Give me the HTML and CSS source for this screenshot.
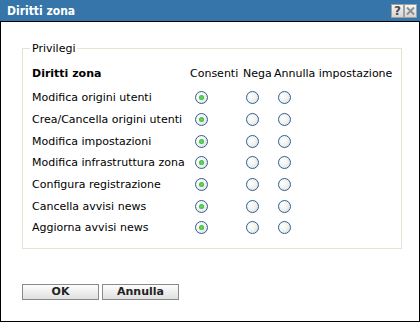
FILE: index.html
```html
<!DOCTYPE html>
<html lang="it">
<head>
    <meta charset="UTF-8">
    <title>Diritti zona</title>
    <link rel="stylesheet" href="styles.css">
</head>
<body>
    <div class="dialog">
        <div class="titlebar">
            <span class="title">Diritti zona</span>
            <div class="title-buttons">
                <span class="tbtn">?</span>
                <span class="tbtn close">
                    <svg width="11" height="12" viewBox="0 0 11 12"><path d="M2 2.5 L9 9.5 M9 2.5 L2 9.5" stroke="#8c8c8c" stroke-width="1.8" fill="none"/></svg>
                </span>
            </div>
        </div>

        <div class="content">
            <fieldset class="group">
                <legend>Privilegi</legend>
                <div class="rights">
                    <div class="cell head name">Diritti zona</div>
                    <div class="cell head">Consenti</div>
                    <div class="cell head">Nega</div>
                    <div class="cell head">Annulla impostazione</div>

                    <div class="cell name">Modifica origini utenti</div>
                    <div class="cell c1"><span class="radio on"></span></div>
                    <div class="cell c2"><span class="radio"></span></div>
                    <div class="cell c3"><span class="radio"></span></div>

                    <div class="cell name">Crea/Cancella origini utenti</div>
                    <div class="cell c1"><span class="radio on"></span></div>
                    <div class="cell c2"><span class="radio"></span></div>
                    <div class="cell c3"><span class="radio"></span></div>

                    <div class="cell name">Modifica impostazioni</div>
                    <div class="cell c1"><span class="radio on"></span></div>
                    <div class="cell c2"><span class="radio"></span></div>
                    <div class="cell c3"><span class="radio"></span></div>

                    <div class="cell name">Modifica infrastruttura zona</div>
                    <div class="cell c1"><span class="radio on"></span></div>
                    <div class="cell c2"><span class="radio"></span></div>
                    <div class="cell c3"><span class="radio"></span></div>

                    <div class="cell name">Configura registrazione</div>
                    <div class="cell c1"><span class="radio on"></span></div>
                    <div class="cell c2"><span class="radio"></span></div>
                    <div class="cell c3"><span class="radio"></span></div>

                    <div class="cell name">Cancella avvisi news</div>
                    <div class="cell c1"><span class="radio on"></span></div>
                    <div class="cell c2"><span class="radio"></span></div>
                    <div class="cell c3"><span class="radio"></span></div>

                    <div class="cell name">Aggiorna avvisi news</div>
                    <div class="cell c1"><span class="radio on"></span></div>
                    <div class="cell c2"><span class="radio"></span></div>
                    <div class="cell c3"><span class="radio"></span></div>
                </div>
            </fieldset>

            <div class="actions">
                <button class="btn">OK</button>
                <button class="btn">Annulla</button>
            </div>
        </div>
    </div>
</body>
</html>
```

FILE: styles.css
```css
* {
    box-sizing: border-box;
    margin: 0;
    padding: 0;
}

body {
    background: #fff;
    font-family: "DejaVu Sans", sans-serif;
    font-size: 11px;
    color: #000;
}

.dialog {
    width: 420px;
    height: 322px;
    display: flex;
    flex-direction: column;
}

.titlebar {
    height: 22px;
    background: #3575a9;
    border-bottom: 1px solid #000;
    display: flex;
    align-items: flex-start;
    justify-content: space-between;
    padding: 0 3px 0 7px;
}

.title {
    color: #fff;
    font-family: "DejaVu Sans Condensed", "DejaVu Sans", sans-serif;
    font-weight: bold;
    font-size: 12px;
    line-height: 22px;
}

.title-buttons {
    display: flex;
    margin-top: 4px;
}

.tbtn {
    width: 13px;
    height: 14px;
    background: linear-gradient(#f6f6f6, #d4d4d4);
    border: 1px solid #a0a0a0;
    color: #4a4a4a;
    font-weight: bold;
    font-size: 12px;
    line-height: 12px;
    text-align: center;
    display: flex;
    align-items: center;
    justify-content: center;
}

.content {
    flex: 1;
    border: 1px solid #000;
    border-top: none;
    padding: 20px 20px 0 21px;
}

.group {
    border: 1px solid #e6e2d4;
    padding: 8px 9px 9px 9px;
}

.group legend {
    padding: 0 2px;
    margin-left: -2px;
    line-height: 13px;
}

.rights {
    display: grid;
    grid-template-columns: 158px 53px 31px auto;
    grid-template-rows: 24px;
    grid-auto-rows: 21.67px;
}

.cell {
    display: flex;
    align-items: center;
    white-space: nowrap;
}

.head {
    align-items: flex-start;
    padding-top: 4px;
}

.head.name {
    font-weight: bold;
}

.c1 {
    padding-left: 5px;
}

.c2 {
    padding-left: 3px;
}

.c3 {
    padding-left: 4px;
}

.radio {
    width: 13px;
    height: 13px;
    border-radius: 50%;
    border: 1px solid #2f5f93;
    background: radial-gradient(circle at 35% 35%, #ffffff 0%, #f1f1ee 50%, #d8d8d2 100%);
    display: flex;
    align-items: center;
    justify-content: center;
}

.radio.on::after {
    content: "";
    width: 5px;
    height: 5px;
    border-radius: 50%;
    background: radial-gradient(circle, #6ee36e 0%, #21a121 100%);
}

.actions {
    display: flex;
    gap: 3px;
    margin-top: 35px;
}

.btn {
    width: 77px;
    height: 16px;
    border: 1px solid #8a8a8a;
    background: linear-gradient(#fdfdfd, #e0e0e0);
    font-family: inherit;
    font-size: 11px;
    font-weight: bold;
    color: #222;
    line-height: 14px;
}
```
